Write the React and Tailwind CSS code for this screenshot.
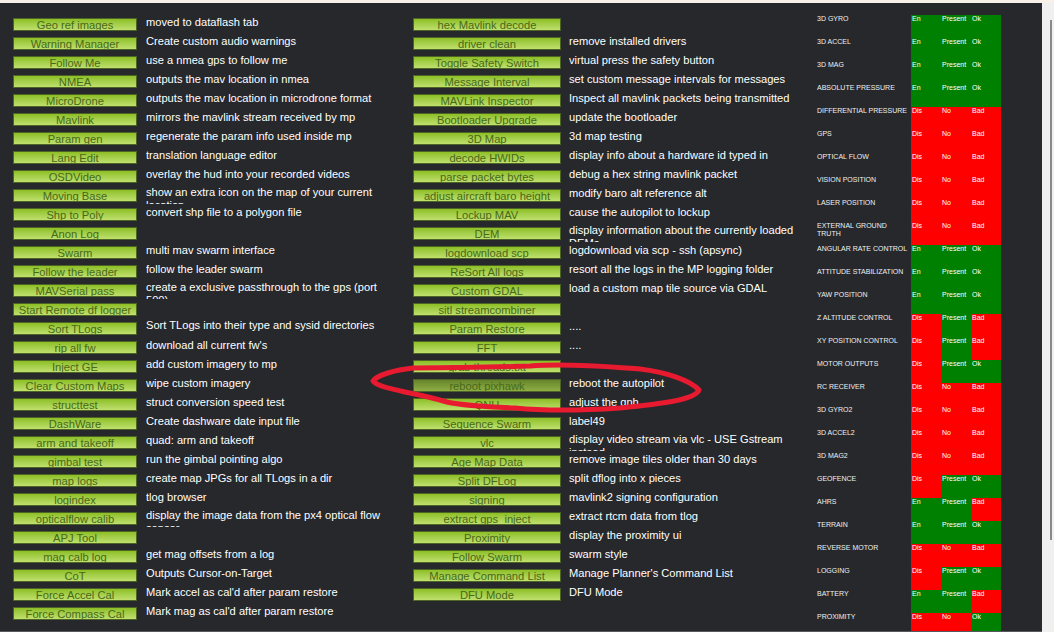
import React from 'react'

const LEFT = [
  ['Geo ref images', 'moved to dataflash tab'],
  ['Warning Manager', 'Create custom audio warnings'],
  ['Follow Me', 'use a nmea gps to follow me'],
  ['NMEA', 'outputs the mav location in nmea'],
  ['MicroDrone', 'outputs the mav location in microdrone format'],
  ['Mavlink', 'mirrors the mavlink stream received by mp'],
  ['Param gen', 'regenerate the param info used inside mp'],
  ['Lang Edit', 'translation language editor'],
  ['OSDVideo', 'overlay the hud into your recorded videos'],
  ['Moving Base', 'show an extra icon on the map of your current location'],
  ['Shp to Poly', 'convert shp file to a polygon file'],
  ['Anon Log', ''],
  ['Swarm', 'multi mav swarm interface'],
  ['Follow the leader', 'follow the leader swarm'],
  ['MAVSerial pass', 'create a exclusive passthrough to the gps (port 500)'],
  ['Start Remote df logger', ''],
  ['Sort TLogs', 'Sort TLogs into their type and sysid directories'],
  ['rip all fw', "download all current fw's"],
  ['Inject GE', 'add custom imagery to mp'],
  ['Clear Custom Maps', 'wipe custom imagery'],
  ['structtest', 'struct conversion speed test'],
  ['DashWare', 'Create dashware date input file'],
  ['arm and takeoff', 'quad: arm and takeoff'],
  ['gimbal test', 'run the gimbal pointing algo'],
  ['map logs', 'create map JPGs for all TLogs in a dir'],
  ['logindex', 'tlog browser'],
  ['opticalflow calib', 'display the image data from the px4 optical flow sensor'],
  ['APJ Tool', ''],
  ['mag calb log', 'get mag offsets from a log'],
  ['CoT', 'Outputs Cursor-on-Target'],
  ['Force Accel Cal', "Mark accel as cal'd after param restore"],
  ['Force Compass Cal', "Mark mag as cal'd after param restore"],
]

const MIDDLE = [
  ['hex Mavlink decode', ''],
  ['driver clean', 'remove installed drivers'],
  ['Toggle Safety Switch', 'virtual press the safety button'],
  ['Message Interval', 'set custom message intervals for messages'],
  ['MAVLink Inspector', 'Inspect all mavlink packets being transmitted'],
  ['Bootloader Upgrade', 'update the bootloader'],
  ['3D Map', '3d map testing'],
  ['decode HWIDs', 'display info about a hardware id typed in'],
  ['parse packet bytes', 'debug a hex string mavlink packet'],
  ['adjust aircraft baro height', 'modify baro alt reference alt'],
  ['Lockup MAV', 'cause the autopilot to lockup'],
  ['DEM', 'display information about the currently loaded DEMs'],
  ['logdownload scp', 'logdownload via scp - ssh (apsync)'],
  ['ReSort All logs', 'resort all the logs in the MP logging folder'],
  ['Custom GDAL', 'load a custom map tile source via GDAL'],
  ['sitl streamcombiner', ''],
  ['Param Restore', '....'],
  ['FFT', '....'],
  ['grab threads.txt', ''],
  ['reboot pixhawk', 'reboot the autopilot', true],
  ['QNH', 'adjust the qnh'],
  ['Sequence Swarm', 'label49'],
  ['vlc', 'display video stream via vlc - USE Gstream instead'],
  ['Age Map Data', 'remove image tiles older than 30 days'],
  ['Split DFLog', 'split dflog into x pieces'],
  ['signing', 'mavlink2 signing configuration'],
  ['extract gps_inject', 'extract rtcm data from tlog'],
  ['Proximity', 'display the proximity ui'],
  ['Follow Swarm', 'swarm style'],
  ['Manage Command List', "Manage Planner's Command List"],
  ['DFU Mode', 'DFU Mode'],
]

// en / present / ok flags, 1 = green
const STATUS = [
  ['3D GYRO', 1, 1, 1],
  ['3D ACCEL', 1, 1, 1],
  ['3D MAG', 1, 1, 1],
  ['ABSOLUTE PRESSURE', 1, 1, 1],
  ['DIFFERENTIAL PRESSURE', 0, 0, 0],
  ['GPS', 0, 0, 0],
  ['OPTICAL FLOW', 0, 0, 0],
  ['VISION POSITION', 0, 0, 0],
  ['LASER POSITION', 0, 0, 0],
  ['EXTERNAL GROUND TRUTH', 0, 0, 0],
  ['ANGULAR RATE CONTROL', 1, 1, 1],
  ['ATTITUDE STABILIZATION', 1, 1, 1],
  ['YAW POSITION', 1, 1, 1],
  ['Z ALTITUDE CONTROL', 0, 1, 0],
  ['XY POSITION CONTROL', 0, 1, 0],
  ['MOTOR OUTPUTS', 0, 1, 1],
  ['RC RECEIVER', 0, 0, 0],
  ['3D GYRO2', 0, 0, 0],
  ['3D ACCEL2', 0, 0, 0],
  ['3D MAG2', 0, 0, 0],
  ['GEOFENCE', 0, 1, 1],
  ['AHRS', 1, 1, 0],
  ['TERRAIN', 1, 1, 1],
  ['REVERSE MOTOR', 0, 0, 0],
  ['LOGGING', 0, 1, 1],
  ['BATTERY', 1, 1, 0],
  ['PROXIMITY', 0, 0, 1],
]

function ToolRow({ label, desc, hot, wide }) {
  const wraps = desc.length > 47
  return (
    <div className="flex h-[19px] shrink-0">
      <div
        className={`mt-[3px] flex h-[13px] shrink-0 items-center justify-center overflow-hidden border border-[#4c6426] text-[11.2px] leading-[13px] text-[#48691a] ${
          wide ? 'w-[148px]' : 'w-[124px]'
        } ${hot ? 'bg-linear-to-b from-[#66852a] to-[#8fae45]' : 'bg-linear-to-b from-[#8dbf22] to-[#c0e06c]'}`}
      >
        <span className="whitespace-nowrap pt-[2px]">{label}</span>
      </div>
      <div
        className={`overflow-hidden text-[11.12px] leading-[13px] text-white ${wide ? 'ml-[8px] w-[228px]' : 'ml-[9px] w-[238px]'} ${
          wraps ? 'h-[18px]' : 'mt-px h-[17px]'
        }`}
      >
        {desc}
      </div>
    </div>
  )
}

function Cell({ on, text }) {
  return (
    <div className={`h-[23px] w-[30px] pl-px text-[7px] leading-[8px] text-white ${on ? 'bg-[#008000]' : 'bg-[#ff0000]'}`}>
      {text}
    </div>
  )
}

function RedScribble() {
  return (
    <svg className="absolute left-0 top-0" width="1054" height="632" fill="none">
      <path
        d="M413 368 C445 368 500 367 530 366 C570 363 610 367 640 369 C665 372 690 380 699 390 C695 400 660 404 620 408 C590 410 545 411 515 408 C490 407 465 406 447 402 C430 397 420 395 405 392 C390 388 378 387 373 381 C377 375 395 370 413 368 Z"
        stroke="#e81a30"
        strokeWidth="5"
        strokeLinejoin="round"
      />
    </svg>
  )
}

export default function App() {
  return (
    <div className="relative flex h-[632px] w-[1054px] flex-col overflow-hidden bg-[#f0f0f0] font-['Liberation_Sans',sans-serif]">
      <div className="h-[3px] shrink-0 bg-[#f8f1ea]" />
      <div className="flex min-h-0 flex-1">
        <div className="flex h-full w-[1042px] overflow-hidden border-b border-[#55585c] bg-[#26282b] pl-[13px] pt-[12px]">
          <div className="flex w-[400px] shrink-0 flex-col">
            {LEFT.map(([label, desc]) => (
              <ToolRow key={label} label={label} desc={desc} />
            ))}
          </div>
          <div className="flex w-[404px] shrink-0 flex-col">
            {MIDDLE.map(([label, desc, hot]) => (
              <ToolRow key={label} label={label} desc={desc} hot={hot} wide />
            ))}
          </div>
          <div className="flex shrink-0 flex-col">
            {STATUS.map(([name, en, present, ok]) => (
              <div key={name} className="flex h-[23px] shrink-0">
                <div className="w-[94px] pr-[2px] text-[7px] leading-[8px] text-[#f0f0f0]">{name}</div>
                <Cell on={en} text={en ? 'En' : 'Dis'} />
                <Cell on={present} text={present ? 'Present' : 'No'} />
                <Cell on={ok} text={ok ? 'Ok' : 'Bad'} />
              </div>
            ))}
          </div>
        </div>
        <div className="flex w-[12px] justify-end pr-[2px] pt-[17px]">
          <div className="h-[520px] w-[2px] bg-[#8a8a8a]" />
        </div>
      </div>
      <RedScribble />
    </div>
  )
}
